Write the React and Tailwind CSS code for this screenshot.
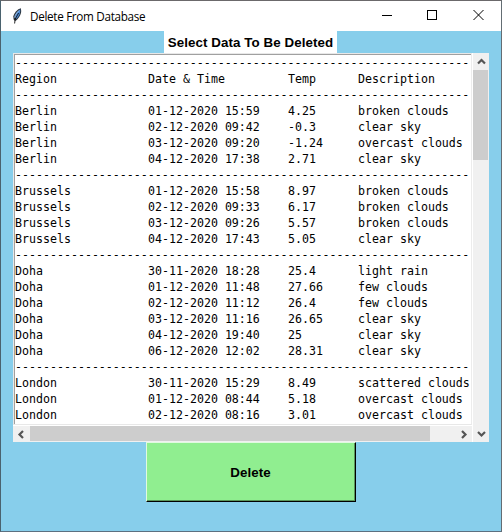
const ROWS = [
  null,
  ["Region", "Date & Time", "Temp", "Description"],
  null,
  ["Berlin", "01-12-2020 15:59", "4.25", "broken clouds"],
  ["Berlin", "02-12-2020 09:42", "-0.3", "clear sky"],
  ["Berlin", "03-12-2020 09:20", "-1.24", "overcast clouds"],
  ["Berlin", "04-12-2020 17:38", "2.71", "clear sky"],
  null,
  ["Brussels", "01-12-2020 15:58", "8.97", "broken clouds"],
  ["Brussels", "02-12-2020 09:33", "6.17", "broken clouds"],
  ["Brussels", "03-12-2020 09:26", "5.57", "broken clouds"],
  ["Brussels", "04-12-2020 17:43", "5.05", "clear sky"],
  null,
  ["Doha", "30-11-2020 18:28", "25.4", "light rain"],
  ["Doha", "01-12-2020 11:48", "27.66", "few clouds"],
  ["Doha", "02-12-2020 11:12", "26.4", "few clouds"],
  ["Doha", "03-12-2020 11:16", "26.65", "clear sky"],
  ["Doha", "04-12-2020 19:40", "25", "clear sky"],
  ["Doha", "06-12-2020 12:02", "28.31", "clear sky"],
  null,
  ["London", "30-11-2020 15:29", "8.49", "scattered clouds"],
  ["London", "01-12-2020 08:44", "5.18", "overcast clouds"],
  ["London", "02-12-2020 08:16", "3.01", "overcast clouds"],
];

function Feather() {
  return (
    <svg className="ml-[11px] h-4 w-3 shrink-0" viewBox="0 0 12 16">
      <path d="M8.9 .2 C5.5 1 2.2 4.5 1.3 8.5 L1.6 11.5 L3 13 C6 11.8 9.2 7 9.2 3Z" fill="#2b333d" />
      <path d="M8.3 1.3 C5.5 3 3.3 6.3 2.8 9.8 L4 11 C6.8 9 8.6 5.5 8.3 1.3Z" fill="#4a8ad6" />
      <path d="M7 2.6 C4.8 4.6 3 7 2.6 9.6" fill="none" stroke="#a9c8ec" strokeWidth="0.9" />
      <path d="M6.6 5 L3.2 11 L2.6 15.5" fill="none" stroke="#111" strokeWidth="0.9" />
    </svg>
  );
}

function Arrow({ d }) {
  return (
    <svg className="h-[9px] w-[9px]" viewBox="0 0 9 9" fill="none" stroke="#555" strokeWidth="2.2">
      <path d={d} />
    </svg>
  );
}

function Row({ cells }) {
  if (!cells) {
    return <div className="h-4 whitespace-pre">{"-".repeat(65)}</div>;
  }
  return (
    <div className="grid h-4 grid-cols-[133px_140px_70px_112px] whitespace-pre">
      {cells.map((c, i) => (
        <span key={i}>{c}</span>
      ))}
    </div>
  );
}

export default function App() {
  return (
    <div className="flex h-[532px] w-[502px] flex-col overflow-hidden border border-t-[#6b696b] border-r-[#646d73] border-b-[#5c7080] border-l-[#4a626e] bg-[#87ceeb] text-black">
      <header className="flex h-[30px] shrink-0 items-center bg-white">
        <Feather />
        <span className="ml-[6px] font-['Open_Sans','Noto_Sans',sans-serif] text-[11.7px] leading-4 tracking-[-0.31px] whitespace-nowrap">
          Delete From Database
        </span>
        <svg className="ml-auto h-[30px] w-[138px] shrink-0" viewBox="0 0 138 30" fill="none" stroke="#000" shapeRendering="crispEdges">
          <path d="M19 14.5h10" />
          <path d="M64.5 9.5h9v9h-9z" />
          <path d="M110.5 9l10 10M120.5 9l-10 10" shapeRendering="auto" />
        </svg>
      </header>

      <h1 className="ml-[163px] flex h-[22px] w-[173px] shrink-0 items-center justify-center bg-white pt-[2px] font-['Liberation_Sans',Arial,sans-serif] text-[13.33px] font-bold tracking-[0.08px] whitespace-nowrap">
        Select Data To Be Deleted
      </h1>

      <section className="ml-3 grid h-[389px] w-[476px] shrink-0 grid-cols-[459px_17px] grid-rows-[372px_17px] bg-[#f0f0f0]">
        <div className="border border-[#e8e8e8] border-r-[#ececec] bg-white">
          <div className="h-full w-[457px] overflow-hidden border-t border-l border-[#a0a0a0] font-['DejaVu_Sans_Mono',monospace] text-[11.627px] leading-4">
            {ROWS.map((cells, i) => (
              <Row key={i} cells={cells} />
            ))}
          </div>
        </div>
        <div className="flex flex-col border-l border-white">
          <div className="flex h-[17px] items-center justify-center">
            <Arrow d="M1 6.5L4.5 3L8 6.5" />
          </div>
          <div className="mr-px h-[90px] bg-[#cdcdcd]" />
        </div>
        <div className="flex border-t border-white">
          <div className="flex w-[17px] items-center justify-center">
            <Arrow d="M6 1L2.5 4.5L6 8" />
          </div>
          <div className="mb-px w-[400px] bg-[#cdcdcd]" />
          <div className="ml-auto flex w-[17px] items-center justify-center">
            <Arrow d="M3 1L6.5 4.5L3 8" />
          </div>
        </div>
        <div className="flex items-center justify-center border-l border-white">
          <Arrow d="M1 3L4.5 6.5L8 3" />
        </div>
      </section>

      <button className="ml-[145px] h-[60px] w-[210px] shrink-0 border border-t-[#e0fae0] border-r-black border-b-black border-l-[#e0fae0]">
        <span className="flex h-full items-center justify-center border-r border-b border-[#5a965a] bg-[#90ee90] pt-[2px] font-['Liberation_Sans',Arial,sans-serif] text-[13.33px] font-bold tracking-[0.08px]">
          Delete
        </span>
      </button>
    </div>
  );
}
